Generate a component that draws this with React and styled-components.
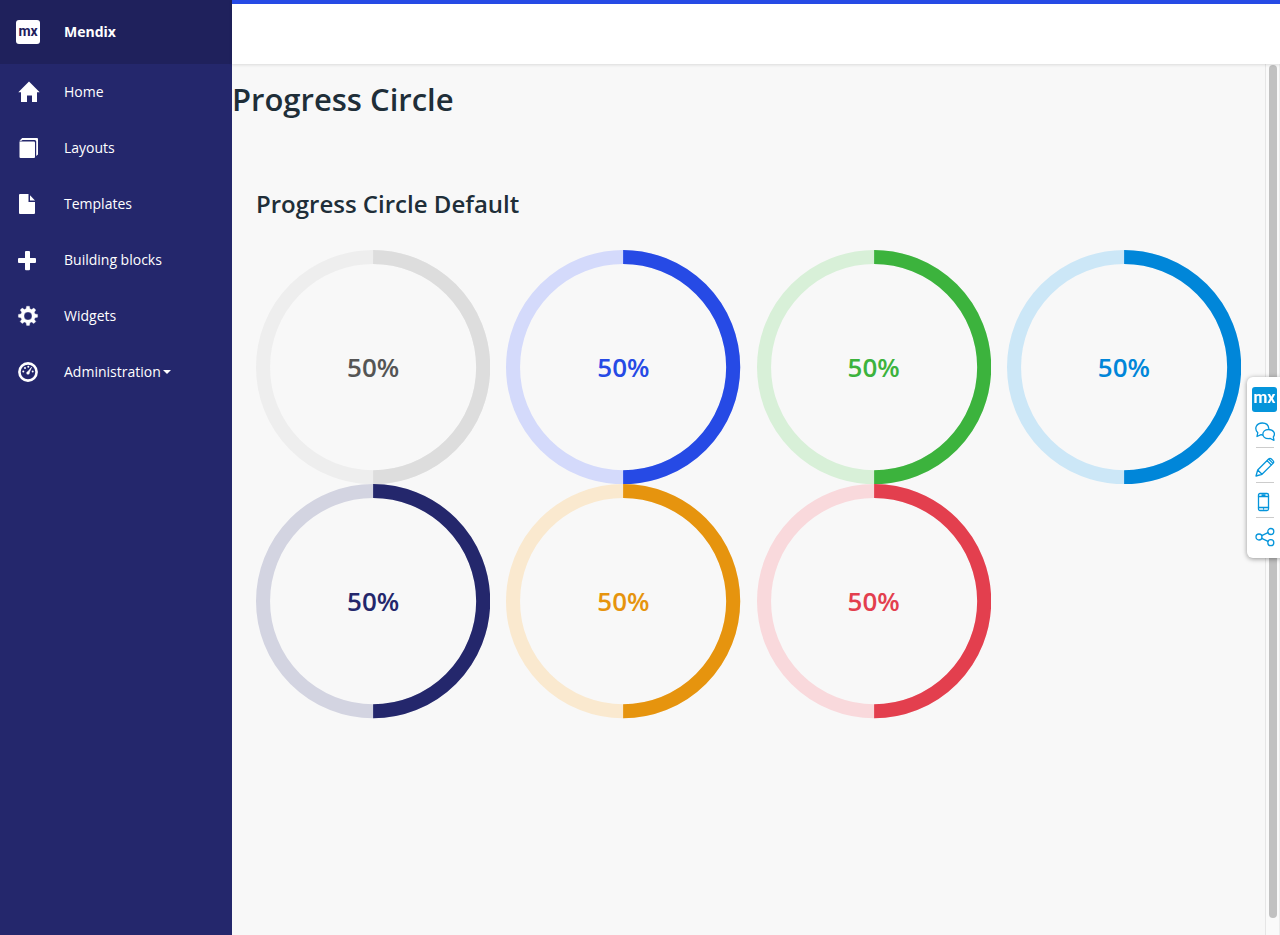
import React from "react";
import styled, { createGlobalStyle } from "styled-components";

const GlobalStyle = createGlobalStyle`
  * { box-sizing: border-box; }
  body {
    margin: 0;
    background: #f8f8f8;
    color: #202e38;
    font-family: "Open Sans", "Noto Sans", sans-serif;
    font-size: 14px;
    line-height: 20px;
  }
`;

const Page = styled.div`
  display: flex;
  height: 100vh;
`;

const Sidebar = styled.nav`
  flex: 0 0 232px;
  background: #24276c;
  color: #fff;
`;

const Brand = styled.a`
  display: flex;
  align-items: center;
  gap: 24px;
  height: 64px;
  padding: 0 16px;
  background: #1f215c;
  color: #fff;
  font-weight: 700;
  text-decoration: none;
`;

const Logo = styled.span`
  display: flex;
  align-items: center;
  justify-content: center;
  width: ${(p) => p.$size}px;
  height: ${(p) => p.$size}px;
  padding-bottom: 3px;
  border-radius: 3px;
  background: ${(p) => p.$bg};
  color: ${(p) => p.$fg};
  font-family: Roboto, "Liberation Sans", sans-serif;
  font-size: ${(p) => p.$font}px;
  font-weight: 700;
  line-height: 16px;
`;

const NavList = styled.ul`
  margin: 0;
  padding: 0;
  list-style: none;
`;

const NavLink = styled.a`
  display: flex;
  align-items: center;
  height: 56px;
  padding: 0 16px;
  color: #fff;
  text-decoration: none;
`;

const NavIcon = styled.svg`
  flex: none;
  width: 24px;
  height: 24px;
  margin-right: 24px;
  fill: currentColor;
`;

const Caret = styled.span`
  margin-left: 2px;
  border: 4px solid transparent;
  border-top-color: currentColor;
  border-bottom: 0;
`;

const Main = styled.div`
  flex: 1;
  min-width: 0;
  display: flex;
  flex-direction: column;
`;

const TopBar = styled.header`
  flex: 0 0 64px;
  border-top: 4px solid #264ae5;
  background: #fff;
  box-shadow: 0 1px 3px rgba(0, 0, 0, 0.12);
  z-index: 1;
`;

const ScrollRegion = styled.div`
  flex: 1;
  min-height: 0;
  display: flex;
`;

const Content = styled.main`
  flex: 1;
  min-width: 0;
`;

const Title = styled.h1`
  margin: 0;
  padding: 14px 0;
  font-size: 31px;
  font-weight: 600;
  line-height: 42px;
`;

const Section = styled.section`
  padding: 52px 24px 24px;
`;

const SectionTitle = styled.h2`
  margin: 0 0 28px;
  font-size: 24px;
  font-weight: 600;
  line-height: 36px;
`;

const CircleGrid = styled.div`
  display: grid;
  grid-template-columns: repeat(4, 1fr);
  column-gap: 16px;
`;

const CircleBox = styled.div`
  display: grid;
  aspect-ratio: 1;
  align-items: center;
  justify-items: center;
  color: ${(p) => p.$text};

  > * { grid-area: 1 / 1; }
`;

const Ring = styled.svg`
  display: block;
  width: 100%;
  fill: none;
  stroke-width: 6;
`;

const Percent = styled.span`
  font-size: 26px;
  font-weight: 600;
  line-height: 36px;
`;

const ScrollTrack = styled.div`
  flex: 0 0 15px;
  padding: 1px 2px 0 3px;
  border-left: 1px solid #e6e6e6;
  border-right: 1px solid #ececec;
  background: #fafafa;
`;

const ScrollThumb = styled.div`
  width: 8px;
  height: 98%;
  border-radius: 4px;
  background: #c1c1c1;
`;

const ToolDock = styled.aside`
  position: fixed;
  z-index: 2;
  right: 0;
  top: 0;
  bottom: 0;
  height: fit-content;
  margin: auto 0;
  display: flex;
  flex-direction: column;
  align-items: center;
  width: 33px;
  padding: 10px 0 4px 2px;
  border-radius: 6px 0 0 6px;
  background: #fff;
  box-shadow: 0 1px 5px rgba(0, 0, 0, 0.4);
`;

const DockTools = styled.div`
  margin-top: 2px;
`;

const DockButton = styled.button`
  display: flex;
  align-items: center;
  justify-content: center;
  width: 31px;
  height: 35px;
  padding: 0;
  border: 0;
  background: none;
  color: #0595db;
  cursor: pointer;

  & + &::before {
    content: "";
    position: absolute;
    width: 18px;
    height: 1px;
    margin-bottom: 38px;
    background: #ccc;
  }
`;

const DockIcon = styled.svg`
  width: 20px;
  height: 20px;
  fill: none;
  stroke: currentColor;
  stroke-width: 1.3;
  stroke-linejoin: round;
  stroke-linecap: round;
`;

const navItems = [
  {
    label: "Home",
    icon: <path d="M13 1.500 23.700 12.200H21V22h-5v-6.500h-5V22H5v-9.800H2.300Z" />,
  },
  {
    label: "Layouts",
    icon: (
      <>
        <path d="M3.500 5.500H18q1 0 1 1V21q0 1-1 1H4.500q-1 0-1-1Z" />
        <path d="M3.500 4.700 6.200 2H21q1 0 1 1v15.500L20.200 20V5.500q0-1.500-1.500-1.500H6.500L5.500 4.700Z" />
      </>
    ),
  },
  {
    label: "Templates",
    icon: (
      <>
        <path d="M4 2h8.500v8H19v11q0 1-1 1H4q-1 0-1-1V3q0-1 1-1Z" />
        <path d="M14 3.200 19 8.600H14Z" />
      </>
    ),
  },
  {
    label: "Building blocks",
    icon: <path d="M9 4q0-1 1-1h3q1 0 1 1v6h5q1 0 1 1v3q0 1-1 1h-5v6.300q0 1-1 1h-3q-1 0-1-1V15H3q-1 0-1-1v-3q0-1 1-1h6Z" />,
  },
  {
    label: "Widgets",
    icon: (
      <path
        fillRule="evenodd"
        d="m10.600 2.200h2.800l.5 2.600 1.700.7 2.200-1.500 2 2-1.500 2.200.7 1.700 2.600.5v2.800l-2.600.5-.7 1.700 1.500 2.200-2 2-2.200-1.500-1.700.7-.5 2.600h-2.800l-.5-2.600-1.700-.7-2.200 1.500-2-2 1.500-2.200-.7-1.700-2.600-.5v-2.800l2.600-.5.7-1.700-1.500-2.200 2-2 2.200 1.500 1.700-.7ZM12 8a4 4 0 1 0 0 8 4 4 0 0 0 0-8Z"
        stroke="currentColor"
        strokeWidth=".3"
      />
    ),
  },
  {
    label: "Administration",
    caret: true,
    icon: (
      <>
        <circle cx="12" cy="12" r="8.600" fill="none" stroke="currentColor" strokeWidth="2.600" />
        <circle cx="7.300" cy="11.500" r="1" />
        <circle cx="9" cy="8" r="1" />
        <circle cx="12.300" cy="6.800" r="1" />
        <circle cx="16.700" cy="11.500" r="1" />
        <circle cx="12" cy="13" r="1.600" />
        <path d="m15.600 7.200-4.400 5.300 1.600.9Z" stroke="currentColor" strokeWidth=".6" />
      </>
    ),
  },
];

const circles = [
  { name: "Default", text: "#555", path: "#ddd", trail: "#eee" },
  { name: "Primary", text: "#264ae5", path: "#264ae5", trail: "#d4dafb" },
  { name: "Success", text: "#3cb33d", path: "#3cb33d", trail: "#d8f0d8" },
  { name: "Info", text: "#0086d9", path: "#0086d9", trail: "#cce7f7" },
  { name: "Inverse", text: "#24276c", path: "#24276c", trail: "#d3d4e1" },
  { name: "Warning", text: "#e6940e", path: "#e6940e", trail: "#fae9cf" },
  { name: "Danger", text: "#e33f4e", path: "#e33f4e", trail: "#f9d9dc" },
];

const dockItems = [
  {
    label: "Feedback",
    icon: (
      <>
        <path d="M7.500 13 6 12.700 2 14.500l.8-3.800C-1.300 6.500 1.500 1 7.300 1c3.700 0 6.200 2.200 6.500 5.500" />
        <path d="M13.500 7.500c-7.500 0-7.500 9.200 0 9.200l1.800-.2 3.700 1.800-.7-3.400c2.700-3.500 0-7.400-4.800-7.400Z" />
      </>
    ),
  },
  {
    label: "Edit",
    icon: (
      <path d="m1 19 1.700-6L13.600 2q1.400-1.400 2.800 0L18 3.600q1.400 1.400 0 2.800L7 17.300ZM2.700 13 7 17.300M12 3.600 16.400 8M13.600 2 18 6.400" />
    ),
  },
  {
    label: "Mobile preview",
    icon: (
      <>
        <rect x="3.500" y="1.500" width="10" height="17" rx="1.500" />
        <path d="M3.500 4.500h10M3.500 15.500h10M7 3h3M8.500 17h.1" />
      </>
    ),
  },
  {
    label: "Share",
    icon: (
      <>
        <circle cx="4" cy="10" r="3" />
        <circle cx="15.800" cy="4.500" r="3" />
        <circle cx="15.800" cy="15.700" r="3" />
        <path d="m6.700 8.700 6.300-3M6.700 11.300l6.300 3" />
      </>
    ),
  },
];

function ProgressCircle({ name, text, path, trail }) {
  return (
    <CircleBox $text={text} role="img" aria-label={name + " progress, 50%"}>
      <Ring viewBox="0 0 100 100" aria-hidden="true">
        <circle cx="50" cy="50" r="47" stroke={trail} />
        <path d="M50 3a47 47 0 0 1 0 94" stroke={path} />
      </Ring>
      <Percent>50%</Percent>
    </CircleBox>
  );
}

export default function App() {
  return (
    <>
      <GlobalStyle />
      <Page>
        <Sidebar>
          <Brand href="#">
            <Logo $size={24} $font={14} $bg="#fff" $fg="#1f215c">mx</Logo>
            Mendix
          </Brand>
          <NavList>
            {navItems.map(({ label, icon, caret }) => (
              <li key={label}>
                <NavLink href="#">
                  <NavIcon viewBox="0 0 24 24" aria-hidden="true">{icon}</NavIcon>
                  {label}
                  {caret && <Caret />}
                </NavLink>
              </li>
            ))}
          </NavList>
        </Sidebar>
        <Main>
          <TopBar />
          <ScrollRegion>
            <Content>
              <Title>Progress Circle</Title>
              <Section>
                <SectionTitle>Progress Circle Default</SectionTitle>
                <CircleGrid>
                  {circles.map((c) => (
                    <ProgressCircle key={c.name} {...c} />
                  ))}
                </CircleGrid>
              </Section>
            </Content>
            <ScrollTrack>
              <ScrollThumb />
            </ScrollTrack>
          </ScrollRegion>
        </Main>
      </Page>
      <ToolDock>
        <Logo $size={25} $font={16} $bg="#0595db" $fg="#fff">mx</Logo>
        <DockTools>
          {dockItems.map(({ label, icon }) => (
            <DockButton key={label} type="button" aria-label={label}>
              <DockIcon viewBox="0 0 20 20" aria-hidden="true">{icon}</DockIcon>
            </DockButton>
          ))}
        </DockTools>
      </ToolDock>
    </>
  );
}
